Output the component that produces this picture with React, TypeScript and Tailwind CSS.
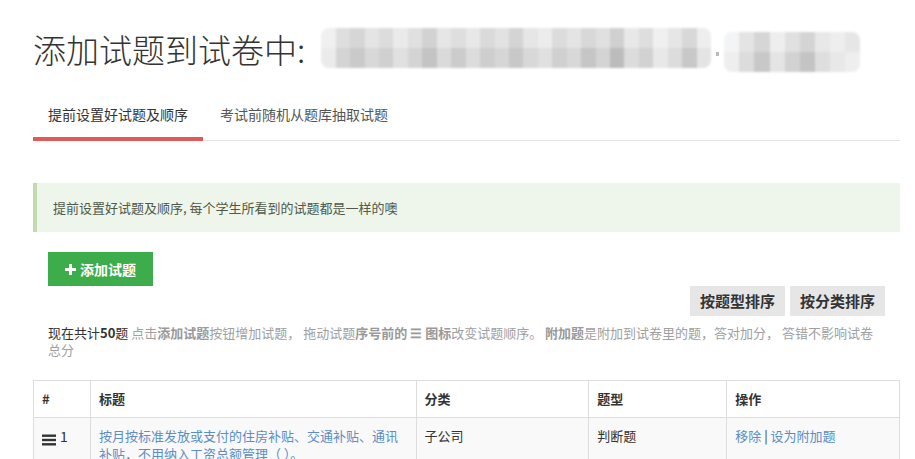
const mosaicTop = [
  "#f0f0f0", "#dedede", "#d6d6d6", "#e4e4e4", "#dcdcdc", "#eaeaea", "#e0e0e0", "#d2d2d2",
  "#e6e6e6", "#dedede", "#e8e8e8", "#dadada", "#e2e2e2", "#d4d4d4", "#e6e6e6", "#ececec",
  "#dcdcdc", "#e4e4e4", "#d8d8d8", "#e0e0e0", "#d0d0d0", "#e8e8e8", "#dedede", "#f0f0f0",
  "#e6e6e6", "#d8d8d8", "#eeeeee",
];
const mosaicBottom = [
  "#ebebeb", "#d4d4d4", "#cacaca", "#d8d8d8", "#d0d0d0", "#e0e0e0", "#d4d4d4", "#c4c4c4",
  "#dadada", "#cccccc", "#dcdcdc", "#cecece", "#d6d6d6", "#c8c8c8", "#d8d8d8", "#e0e0e0",
  "#d0d0d0", "#d8d8d8", "#c6c6c6", "#d4d4d4", "#bcbcbc", "#dcdcdc", "#d2d2d2", "#e8e8e8",
  "#dcdcdc", "#c8c8c8", "#e4e4e4",
];
const mosaicTop2 = ["#f2f4f6", "#e4e4e4", "#d6d6d6", "#eeeeee", "#e0e0e0", "#d4d4d4", "#e8e8e8", "#eeeeee", "#e6e6e6"];
const mosaicBottom2 = ["#eeeeee", "#dcdcdc", "#c8c8c8", "#e4e4e4", "#d2d2d2", "#c4c4c4", "#dedede", "#e8e8e8", "#eeeeee"];

function Mosaic({ top, bottom, width }: { top: string[]; bottom: string[]; width: string }) {
  return (
    <div className={`${width} flex h-[40px] flex-col overflow-hidden rounded-[8px] blur-[1px]`}>
      <div className="flex h-[20px]">
        {top.map((c, i) => (
          <div key={i} className="h-full flex-1" style={{ backgroundColor: c }} />
        ))}
      </div>
      <div className="flex h-[20px]">
        {bottom.map((c, i) => (
          <div key={i} className="h-full flex-1" style={{ backgroundColor: c }} />
        ))}
      </div>
    </div>
  );
}

function BlurredName() {
  return (
    <div className="ml-[16px] flex h-[44px] items-start pt-[1px]">
      <Mosaic top={mosaicTop} bottom={mosaicBottom} width="w-[390px]" />
      <div className="mx-[5px] mt-[24px] h-[4px] w-[3px] bg-[#bbb] blur-[0.5px]" />
      <div className="mt-[4px]">
        <Mosaic top={mosaicTop2} bottom={mosaicBottom2} width="w-[136px]" />
      </div>
    </div>
  );
}

function DragIcon() {
  return (
    <svg width="14" height="12" viewBox="0 0 14 12" className="mr-[4px] inline-block">
      <rect x="0" y="0.5" width="14" height="2.4" fill="#333" />
      <rect x="0" y="4.8" width="14" height="2.4" fill="#333" />
      <rect x="0" y="9.1" width="14" height="2.4" fill="#333" />
    </svg>
  );
}

const cols = ["w-[57px]", "w-[326px]", "w-[173px]", "w-[138px]", "w-[173px]"];

export default function App() {
  return (
    <div
      className="min-h-[459px] bg-white text-[#333]"
      style={{ fontFamily: '"Noto Sans CJK SC", "Noto Sans", sans-serif' }}
    >
      <div className="ml-[33px] w-[867px]">
        {/* title */}
        <div className="flex h-[44px] items-center overflow-visible pt-[27px] box-content">
          <h1 className="text-[33px] font-light leading-[44px] text-[#333]">添加试题到试卷中:</h1>
          <BlurredName />
        </div>

        {/* tabs */}
        <div className="mt-[27px] flex border-b border-[#e5e5e5] text-[14px]">
          <div className="-mb-px w-[170px] border-b-[4px] border-[#e05a5a] pt-[6px] pb-[12px] pl-[15px] text-[#333]">
            提前设置好试题及顺序
          </div>
          <div className="ml-[2px] pt-[6px] pb-[12px] pl-[15px] text-[#555]">考试前随机从题库抽取试题</div>
        </div>

        {/* alert */}
        <div className="mt-[42px] flex h-[49px] items-center border-l-[4px] border-[#c3d9ae] bg-[#eef5ea] pl-[16px] text-[13px] text-[#4f5a4a]">
          提前设置好试题及顺序, 每个学生所看到的试题都是一样的噢
        </div>

        <div className="px-[15px]">
          <button className="mt-[20px] flex h-[34px] w-[105px] items-center justify-center gap-[4px] bg-[#3dac4a] text-[14px] font-bold text-white">
            <svg width="11" height="11" viewBox="0 0 11 11">
              <rect x="4" y="0" width="3" height="11" fill="#fff" />
              <rect x="0" y="4" width="11" height="3" fill="#fff" />
            </svg>
            添加试题
          </button>

          <div className="flex justify-end gap-[5px]">
            <button className="h-[30px] w-[95px] bg-[#e6e6e6] text-[15px] font-bold text-[#333]">按题型排序</button>
            <button className="h-[30px] w-[95px] bg-[#e6e6e6] text-[15px] font-bold text-[#333]">按分类排序</button>
          </div>

          <p className="mt-[8px] text-[13px] leading-[17px] text-[#a0a0a0]">
            <span className="text-[#333]">
              现在共计<b>50</b>题
            </span>{" "}
            点击<b className="text-[#999]">添加试题</b>按钮增加试题， 拖动试题<b className="text-[#999]">序号前的 ☰ 图标</b>
            改变试题顺序。 <b className="text-[#999]">附加题</b>是附加到试卷里的题，答对加分， 答错不影响试卷总分
          </p>
        </div>

        {/* table */}
        <div className="mt-[22px] border-t border-l border-[#ddd] text-[13px]">
          <div className="flex h-[37px] font-bold text-[#333]">
            {["#", "标题", "分类", "题型", "操作"].map((h, i) => (
              <div key={h} className={`${cols[i]} flex items-center border-r border-b border-[#ddd] px-[8px]`}>
                {h}
              </div>
            ))}
          </div>
          <div className="flex bg-[#f9f9f9] leading-[18px]">
            <div className={`${cols[0]} flex items-start border-r border-[#ddd] px-[8px] pt-[9px]`}>
              <span className="mt-[3px]">
                <DragIcon />
              </span>
              <span className="text-[14px]">1</span>
            </div>
            <div className={`${cols[1]} border-r border-[#ddd] px-[8px] pt-[9px] text-[#5b8dc6]`}>
              按月按标准发放或支付的住房补贴、交通补贴、通讯补贴，不用纳入工资总额管理（ ）。
            </div>
            <div className={`${cols[2]} border-r border-[#ddd] px-[8px] pt-[9px]`}>子公司</div>
            <div className={`${cols[3]} border-r border-[#ddd] px-[8px] pt-[9px]`}>判断题</div>
            <div className={`${cols[4]} h-[60px] border-r border-[#ddd] px-[8px] pt-[9px]`}>
              <span className="text-[#5b8dc6]">移除</span> | <span className="text-[#5b8dc6]">设为附加题</span>
            </div>
          </div>
        </div>
      </div>
    </div>
  );
}
